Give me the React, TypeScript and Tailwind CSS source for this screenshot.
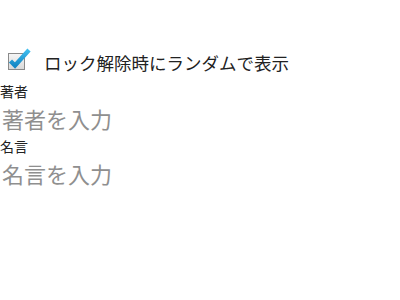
import { useState } from "react";

function HoloCheck({ checked }: { checked: boolean }) {
  return (
    <svg width="26" height="26" viewBox="0 0 26 26" className="mb-[8px] shrink-0">
      <defs>
        <linearGradient id="boxFill" x1="0" y1="0" x2="0" y2="1">
          <stop offset="0" stopColor="#f6f6f6" />
          <stop offset="1" stopColor="#d8d8d8" />
        </linearGradient>
        <linearGradient id="tick" x1="0" y1="0" x2="0" y2="1">
          <stop offset="0" stopColor="#3fbdee" />
          <stop offset="1" stopColor="#1488c6" />
        </linearGradient>
      </defs>
      <rect x="2.5" y="7.5" width="16" height="16" fill="url(#boxFill)" stroke="#8a8a8a" strokeWidth="1" />
      {checked && (
        <path
          d="M4.5 15 L9 19.5 L23 4"
          fill="none"
          stroke="url(#tick)"
          strokeWidth="4.4"
          strokeLinecap="butt"
          strokeLinejoin="miter"
        />
      )}
    </svg>
  );
}

export default function App() {
  const [random, setRandom] = useState(true);
  const [author, setAuthor] = useState("");
  const [quote, setQuote] = useState("");

  return (
    <div
      className="w-[400px] h-[300px] bg-white pt-[43px] overflow-hidden"
      style={{ fontFamily: '"Noto Sans CJK JP", "Noto Sans", sans-serif' }}
    >
      {/* Random toggle */}
      <label
        className="flex items-center h-[40px] pl-[6px] gap-[12px] cursor-pointer"
        onClick={() => setRandom(!random)}
      >
        <HoloCheck checked={random} />
        <span className="text-[17.5px] leading-[24px] text-[#222]">ロック解除時にランダムで表示</span>
      </label>

      {/* Author */}
      <div className="text-[14px] leading-[16px] text-[#222]">著者</div>
      <input
        value={author}
        onChange={(e) => setAuthor(e.target.value)}
        placeholder="著者を入力"
        className="block w-full h-[39px] pl-[2px] pb-[2px] text-[22px] leading-[26px] text-[#222] placeholder:text-[#8f8f8f] outline-none bg-transparent"
      />

      {/* Quote */}
      <div className="text-[14px] leading-[16px] text-[#222]">名言</div>
      <input
        value={quote}
        onChange={(e) => setQuote(e.target.value)}
        placeholder="名言を入力"
        className="block w-full h-[39px] pl-[2px] pb-[2px] text-[22px] leading-[26px] text-[#222] placeholder:text-[#8f8f8f] outline-none bg-transparent"
      />
    </div>
  );
}
